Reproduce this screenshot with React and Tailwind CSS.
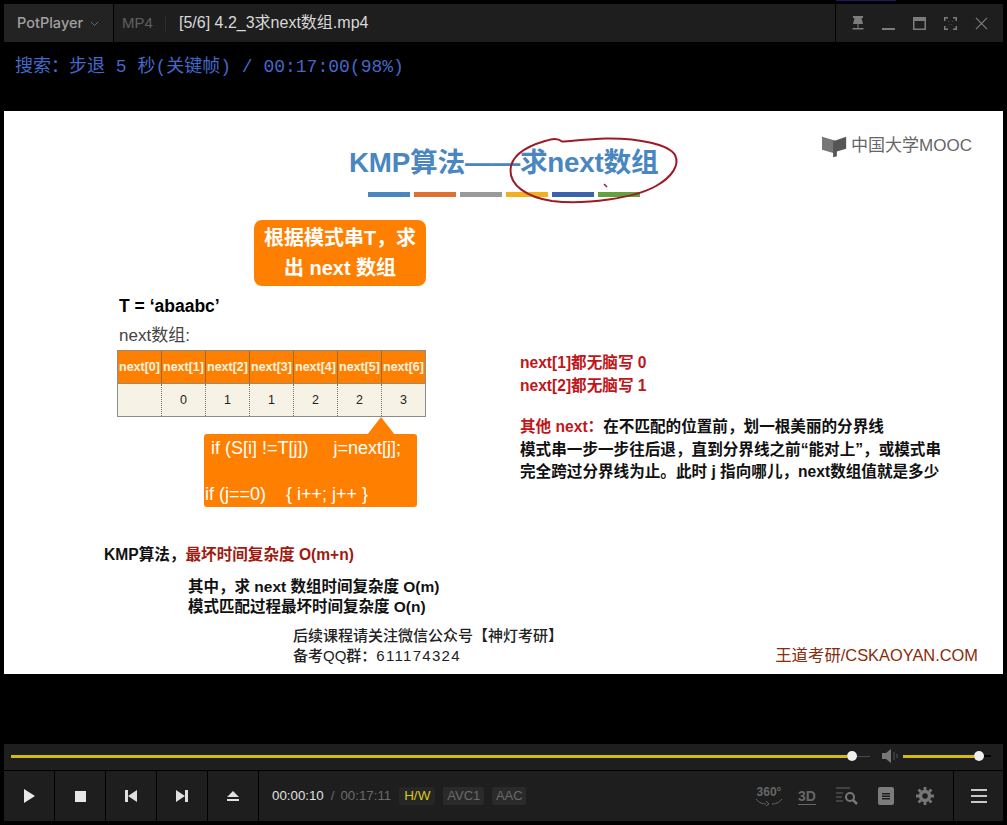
import React from 'react';

const sans = 'font-["Liberation_Sans","Noto_Sans_CJK_SC",sans-serif]';

// table values
const heads = ['next[0]', 'next[1]', 'next[2]', 'next[3]', 'next[4]', 'next[5]', 'next[6]'];
const vals = ['', '0', '1', '1', '2', '2', '3'];
const barColors = ['bg-[#4a86c0]', 'bg-[#de7030]', 'bg-[#9a9a9a]', 'bg-[#f2b01e]', 'bg-[#3a62ad]', 'bg-[#64a03e]'];

function TitleBar() {
  return (
    <div className="flex h-[38px] mx-[4px] bg-[#1e1e1e] items-center">
      <div className="flex items-center w-[110px] h-full bg-[#232323] border-r border-black pl-[13px] font-['Inter','Liberation_Sans',sans-serif] text-[14.500px] font-medium text-[#a0a0a0]">
        PotPlayer
        <svg className="ml-[7px] mt-[1px]" width="9" height="6" viewBox="0 0 9 6">
          <path d="M1 1l3.500 3.500L8 1" fill="none" stroke="#6a6a6a" strokeWidth="1" />
        </svg>
      </div>
      <div className={`ml-[8px] w-[44px] border-r border-[#2c2c2c] text-[15px] leading-[16px] text-[#606060] ${sans}`}>MP4</div>
      <div className={`ml-[13px] text-[16px] text-[#d8d8d8] ${sans}`}>[5/6] 4.2_3求next数组.mp4</div>
      <div className="ml-auto flex items-center h-full w-[168px] border-l border-black pl-[14px]">
        <svg width="16" height="16" viewBox="0 0 16 16" className="mr-[16px]">
          <path d="M3 1h10v2h-1.500l1.500 6h-10l1.500-6h-1.500zM7.500 9h1v4h5v1.500h-11v-1.500h5z" fill="#7c7c7c" />
        </svg>
        <div className="w-[13px] h-[2px] bg-[#7c7c7c] mt-[11px] mr-[18px]" />
        <svg width="13" height="13" viewBox="0 0 13 13" className="mr-[18px]">
          <path d="M.750.750h11.500v11.500h-11.500z" fill="none" stroke="#7c7c7c" strokeWidth="1.500" />
          <path d="M1 1h11v3h-11z" fill="#7c7c7c" />
        </svg>
        <svg width="13" height="13" viewBox="0 0 13 13" className="mr-[18px]">
          <path d="M.750 4v-3.250h3.250M9 .750h3.250v3.250M12.250 9v3.250h-3.250M4 12.250h-3.250v-3.250" fill="none" stroke="#7c7c7c" strokeWidth="1.500" />
          <path d="M4 4l5 5M9 4l-5 5" stroke="#4a4a4a" strokeWidth="1" strokeDasharray="1.500 3" />
        </svg>
        <svg width="13" height="13" viewBox="0 0 14 14">
          <path d="M1 1l12 12M13 1l-12 12" stroke="#7c7c7c" strokeWidth="1.300" />
        </svg>
      </div>
    </div>
  );
}

function Slide() {
  return (
    <div className={`relative mx-[4px] h-[563px] bg-white flex flex-col ${sans}`}>
      <div className="flex items-start h-[81px]">
        <div className="ml-[345px] mt-[32px] text-[27.700px] leading-[40px] font-bold text-[#4a86c0] whitespace-nowrap tracking-[-0.200px]">
          KMP算法——求next数组
        </div>
        <div className="ml-auto mr-[31px] mt-[23px] flex items-center text-[#666] text-[17px] leading-[24px]">
          <svg width="26" height="24" viewBox="0 0 28 24" className="mr-[3px]">
            <path d="M0 2l14 4v14l-14-4z" fill="#777" />
            <path d="M12 7l14-5v13l-10 3v5l-4 1z" fill="#555" />
          </svg>
          中国大学MOOC
        </div>
      </div>
      <div className="flex ml-[364px] gap-[4px]">
        {barColors.map((c) => (
          <div key={c} className={`w-[42px] h-[5px] ${c}`} />
        ))}
      </div>

      <div className="flex">
        <div className="w-[516px] shrink-0">
          <div className="ml-[250px] mt-[23px] w-[172px] h-[66px] rounded-[8px] bg-[#ff8000] flex flex-col items-center justify-center text-[20px] leading-[30px] font-bold text-white">
            <div>根据模式串T，求</div>
            <div>出 next 数组</div>
          </div>
          <div className="ml-[115px] mt-[9px] text-[17.500px] leading-[22px] font-bold text-black">T = ‘abaabc’</div>
          <div className="ml-[115px] mt-[8px] text-[17px] leading-[22px] text-[#444]">next数组:</div>
          <div className="ml-[113px] mt-[3px] w-[309px] border border-[#8c8c8c]">
            <div className="flex h-[32px] bg-[#ff8000]">
              {heads.map((h, i) => (
                <div key={h} className={`flex-1 flex items-center justify-center text-[12.500px] font-bold text-[#fff3e0] ${i > 0 ? 'border-l border-[#9a6a30]' : ''}`}>
                  {h}
                </div>
              ))}
            </div>
            <div className="flex h-[33px] bg-[#f6f3e6] border-t border-[#9a8a70]">
              {vals.map((v, i) => (
                <div key={i} className={`flex-1 flex items-center justify-center text-[12.500px] text-[#222] ${i > 0 ? 'border-l border-dotted border-[#777]' : ''}`}>
                  {v}
                </div>
              ))}
            </div>
          </div>
          <div className="relative ml-[200px] mt-[17px] w-[213px] h-[73px] rounded-[3px] bg-[#ff8000] text-white text-[18px] leading-[20px]">
            <svg className="absolute left-[163px] top-[-17px]" width="28" height="17" viewBox="0 0 28 18">
              <path d="M14 0l14 18h-28z" fill="#ff8000" />
            </svg>
            <div className="pl-[7px] pt-[4px] whitespace-pre">if (S[i] !=T[j])     j=next[j];</div>
            <div className="pl-[1px] mt-[26px] whitespace-pre">if (j==0)    {'{'} i++; j++ {'}'}</div>
          </div>
        </div>

        <div className="mt-[155px] text-[15.600px] leading-[22.500px] font-bold text-[#111]">
          <div className="text-[#c0161a]">next[1]都无脑写 0</div>
          <div className="text-[#c0161a]">next[2]都无脑写 1</div>
          <div className="mt-[19px]"><span className="text-[#c0161a]">其他 next：</span>在不匹配的位置前，划一根美丽的分界线</div>
          <div>模式串一步一步往后退，直到分界线之前“能对上”，或模式串</div>
          <div>完全跨过分界线为止。此时 j 指向哪儿，next数组值就是多少</div>
        </div>
      </div>

      <div className="ml-[100px] mt-[38px] text-[15.600px] leading-[20px] font-bold text-[#111]">
        KMP算法，<span className="text-[#a01a10]">最坏时间复杂度 O(m+n)</span>
      </div>
      <div className="ml-[184px] mt-[12px] text-[15.500px] leading-[20px] font-bold text-[#111]">
        <div>其中，求 next 数组时间复杂度 O(m)</div>
        <div>模式匹配过程最坏时间复杂度 O(n)</div>
      </div>
      <div className="flex items-end mt-[9px]">
        <div className="ml-[289px] text-[15px] leading-[19.500px] font-medium text-[#222]">
          <div>后续课程请关注微信公众号【神灯考研】</div>
          <div>备考QQ群：<span className="tracking-[1.300px]">611174324</span></div>
        </div>
        <div className="ml-auto mr-[25px] text-[16.400px] leading-[20px] text-[#8a2c0c]">王道考研/CSKAOYAN.COM</div>
      </div>

      {/* 手写的红圈 */}
      <svg className="absolute left-[501px] top-[26px]" width="180" height="72" viewBox="505 137 180 72">
        <path
          d="M562 141.500C557 137.500 552 139 545 141C528 146 511 155 510.500 170C510 185 526 197 552 201C585 205 635 198 656 186C672 177 680 165 675 155C669 145 640 138 606 138.500C588 139 572 141 562 141.500Z"
          fill="none"
          stroke="#9c1c26"
          strokeWidth="2"
        />
        <path d="M604 184l3 3" stroke="#9c1c26" strokeWidth="1.500" />
      </svg>
    </div>
  );
}

function Cell({ children }) {
  return <div className="w-[51px] h-full flex items-center justify-center border-r border-black">{children}</div>;
}

function Controls() {
  return (
    <div className={`mx-[4px] h-[77px] bg-[#1e1e1e] flex flex-col ${sans}`}>
      <div className="h-[27px] flex items-center border-b border-black pb-[2px]">
        <div className="ml-[7px] w-[836px] h-[3px] bg-[#d0bc14]" />
        <div className="w-[10px] h-[10px] rounded-full bg-[#efefef]" />
        <div className="w-[13px] h-px bg-[#4a4a4a]" />
        <svg width="16" height="14" viewBox="0 0 16 14" className="ml-[12px]">
          <path d="M0 4h4l5-4v14l-5-4h-4z" fill="#777" />
          <path d="M12 3v8M15 5v4" stroke="#555" strokeWidth="1" />
        </svg>
        <div className="ml-[5px] w-[71px] h-[3px] bg-[#d0bc14]" />
        <div className="w-[10px] h-[10px] rounded-full bg-[#efefef]" />
        <div className="w-[7px] h-[2px] bg-black" />
      </div>
      <div className="flex-1 flex items-center min-h-0">
        <Cell>
          <svg width="12" height="14" viewBox="0 0 12 14"><path d="M1 0l11 7-11 7z" fill="#e8e8e8" /></svg>
        </Cell>
        <Cell>
          <div className="w-[11px] h-[11px] bg-[#e8e8e8]" />
        </Cell>
        <Cell>
          <svg width="12" height="12" viewBox="0 0 12 12"><path d="M0 0h3v12h-3zM12 0v12l-9-6z" fill="#e0e0e0" /></svg>
        </Cell>
        <Cell>
          <svg width="12" height="12" viewBox="0 0 12 12"><path d="M12 0h-3v12h3zM0 0v12l9-6z" fill="#e0e0e0" /></svg>
        </Cell>
        <Cell>
          <svg width="12" height="11" viewBox="0 0 12 11"><path d="M6 0l6 6h-12zM0 8h12v2h-12z" fill="#e0e0e0" /></svg>
        </Cell>
        <div className="ml-[13px] text-[13.300px] text-[#e0e0e0]">00:00:10</div>
        <div className="ml-[7px] text-[13.300px] text-[#6a6a6a]">/</div>
        <div className="ml-[6px] text-[13.300px] text-[#6a6a6a]">00:17:11</div>
        <div className="ml-[8px] w-[36px] h-[18px] rounded-[2px] bg-[#262626] flex items-center justify-center text-[13.500px] text-[#d8c81e]">H/W</div>
        <div className="ml-[8px] w-[41px] h-[18px] rounded-[2px] bg-[#2a2a2a] flex items-center justify-center text-[13px] text-[#6a6a6a]">AVC1</div>
        <div className="ml-[8px] w-[34px] h-[18px] rounded-[2px] bg-[#2a2a2a] flex items-center justify-center text-[13px] text-[#6a6a6a]">AAC</div>

        <div className="ml-auto flex items-center h-full">
          <div className="relative w-[28px] h-[22px] mr-[15px] text-[12px] leading-[14px] font-bold text-[#666] text-center">
            360°
            <svg className="absolute left-0 top-[13px]" width="28" height="9" viewBox="0 0 28 9">
              <path d="M1 1c3 4 7 5 10 5M27 1c-3 4-7 5-10 5M11 3l3 3-3 2" fill="none" stroke="#666" strokeWidth="1" />
            </svg>
          </div>
          <div className="w-[18px] mr-[20px] border-b border-[#666] text-[14px] leading-[16px] font-bold text-[#666] text-center">3D</div>
          <svg width="22" height="18" viewBox="0 0 22 18" className="mr-[20px]">
            <path d="M0 1h14M0 6h7M0 10h6M0 14h7" stroke="#666" strokeWidth="1" />
            <circle cx="14" cy="10" r="4" fill="none" stroke="#777" strokeWidth="2" />
            <path d="M17 13l4 4" stroke="#777" strokeWidth="2.500" />
          </svg>
          <svg width="16" height="18" viewBox="0 0 16 18" className="mr-[22px]">
            <path d="M2 0h12a2 2 0 0 1 2 2v14a2 2 0 0 1-2 2h-12a2 2 0 0 1-2-2v-14a2 2 0 0 1 2-2zM4 6v1.500h8v-1.500zM4 8.500v1.500h8v-1.500zM4 11v1.500h8v-1.500z" fill="#7c7c7c" fillRule="evenodd" />
          </svg>
          <svg width="18" height="18" viewBox="0 0 18 18" className="mr-[19px]">
            <circle cx="9" cy="9" r="4.500" fill="none" stroke="#777" strokeWidth="3.500" />
            <path d="M9 0v3M9 15v3M0 9h3M15 9h3M2.600 2.600l2.100 2.100M13.300 13.300l2.100 2.100M15.400 2.600l-2.100 2.100M4.700 13.300l-2.100 2.100" stroke="#777" strokeWidth="2.800" />
          </svg>
          <div className="w-[50px] h-full border-l border-black flex flex-col items-center justify-center gap-[4px]">
            <div className="w-[16px] h-[2px] bg-[#c8c8c8]" />
            <div className="w-[16px] h-[2px] bg-[#c8c8c8]" />
            <div className="w-[16px] h-[2px] bg-[#c8c8c8]" />
          </div>
        </div>
      </div>
    </div>
  );
}

export default function App() {
  return (
    <div className="w-[1007px] h-[825px] bg-black overflow-hidden">
      <div className="h-[4px]">
        <div className="ml-[836px] w-[60px] h-px bg-[#1a1a6a]" />
      </div>
      <TitleBar />
      <div className="h-[69px] pl-[15px] pt-[11px] font-['Liberation_Mono','Noto_Sans_CJK_SC',monospace] text-[18px] leading-[28px] text-[#4468c8] whitespace-pre">
        搜索：步退 5 秒(关键帧) / 00:17:00(98%)
      </div>
      <Slide />
      <div className="h-[70px]" />
      <Controls />
    </div>
  );
}
